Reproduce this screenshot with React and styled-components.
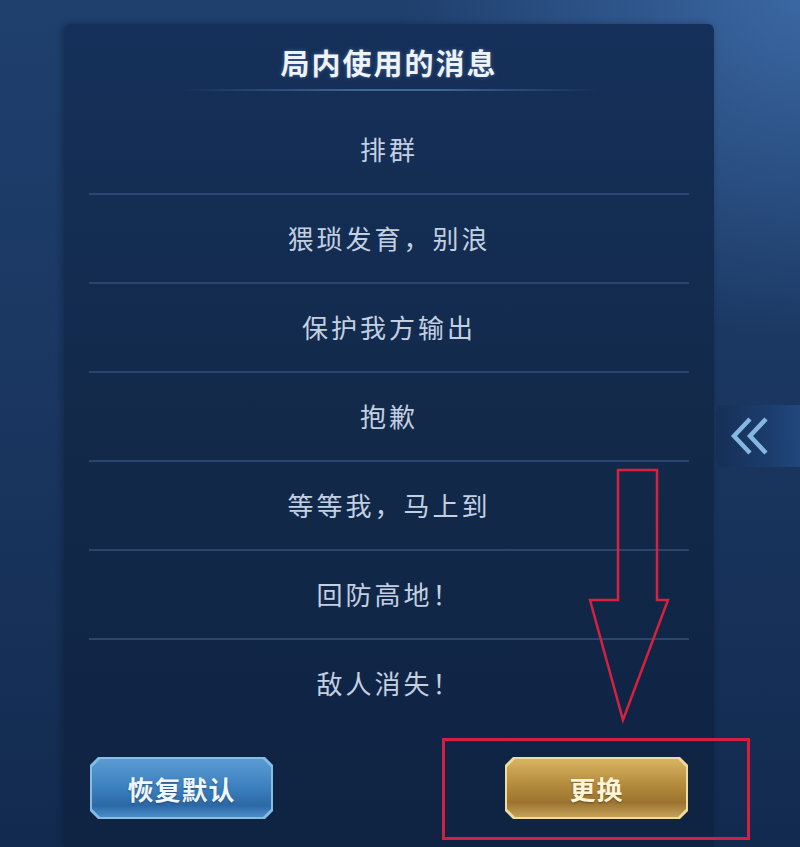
import React from 'react'
import styled, { createGlobalStyle } from 'styled-components'

const GlobalStyle = createGlobalStyle`
  html, body {
    margin: 0;
    padding: 0;
    background: #162f57;
  }
  * {
    box-sizing: border-box;
  }
`;

const messages = [
  '排群',
  '猥琐发育，别浪',
  '保护我方输出',
  '抱歉',
  '等等我，马上到',
  '回防高地！',
  '敌人消失！',
];

function App() {
  return (
    <>
      <GlobalStyle />
      <Page>
        <Panel>
          <TitleBlock>
            <Title>局内使用的消息</Title>
            <Glow />
          </TitleBlock>
          <MessageList>
            {messages.map((m, i) => (
              <Row key={m} last={i === messages.length - 1}>
                {m}
              </Row>
            ))}
          </MessageList>
          <ButtonBar>
            <ButtonFrame tone="blue">
              <ButtonFace tone="blue">恢复默认</ButtonFace>
            </ButtonFrame>
            <ButtonFrame tone="gold">
              <ButtonFace tone="gold">更换</ButtonFace>
            </ButtonFrame>
          </ButtonBar>
        </Panel>
        <Side>
          <Tab>
            <svg width="46" height="44" viewBox="0 0 46 44">
              <polyline points="24,5 8,22 24,39" fill="none" stroke="#86b6e2" strokeWidth="4.5" strokeLinejoin="miter" />
              <polyline points="40,5 24,22 40,39" fill="none" stroke="#86b6e2" strokeWidth="4.5" strokeLinejoin="miter" />
            </svg>
          </Tab>
        </Side>
        <Arrow width="90" height="262" viewBox="0 0 90 262">
          <polygon
            points="33,5 72,5 72,135 83,135 38,255 5,135 33,135"
            fill="none"
            stroke="#d8203f"
            strokeWidth="2.5"
            strokeLinejoin="miter"
          />
        </Arrow>
        <Highlight />
      </Page>
    </>
  );
}

const Page = styled.div`
  position: relative;
  width: 800px;
  height: 847px;
  overflow: hidden;
  display: flex;
  padding: 24px 0 0 64px;
  font-family: "Noto Sans CJK SC", "Noto Sans", sans-serif;
  background:
    radial-gradient(ellipse 420px 360px at 820px -20px, rgba(70, 120, 185, 0.75), rgba(70, 120, 185, 0) 100%),
    linear-gradient(180deg, #1f3f6d 0%, #1a3761 45%, #132a4f 100%);
`;

const Panel = styled.div`
  width: 650px;
  display: flex;
  flex-direction: column;
  padding: 0 25px;
  border-radius: 6px 6px 0 0;
  background: linear-gradient(180deg, #15305a 0%, #122949 50%, #0f2343 100%);
  box-shadow: -2px 0 6px rgba(8, 20, 40, 0.35);
`;

const TitleBlock = styled.div`
  height: 82px;
  display: flex;
  flex-direction: column;
  align-items: center;
  padding-top: 23px;
`;

const Title = styled.h1`
  margin: 0;
  font-size: 29px;
  line-height: 30px;
  font-weight: 700;
  letter-spacing: 2px;
  color: #eef3fa;
  text-shadow: 0 0 4px rgba(150, 190, 240, 0.35);
`;

const Glow = styled.div`
  margin-top: 12px;
  width: 420px;
  height: 2px;
  background: linear-gradient(90deg, rgba(90, 140, 200, 0) 0%, rgba(110, 160, 220, 0.5) 45%, rgba(110, 160, 220, 0.5) 60%, rgba(90, 140, 200, 0) 100%);
`;

const MessageList = styled.div`
  display: flex;
  flex-direction: column;
`;

const Row = styled.div`
  height: ${p => (p.last ? '87px' : '89px')};
  display: flex;
  align-items: center;
  justify-content: center;
  padding-bottom: 2px;
  font-size: 26px;
  letter-spacing: 3px;
  color: #c2d0e2;
  border-bottom: ${p => (p.last ? 'none' : '2px solid #2a4670')};
`;

const ButtonBar = styled.div`
  display: flex;
  justify-content: space-between;
  padding: 30px 1px 0;
`;

const chamfer = `polygon(8px 0, calc(100% - 8px) 0, 100% 8px, 100% calc(100% - 8px), calc(100% - 8px) 100%, 8px 100%, 0 calc(100% - 8px), 0 8px)`;

const ButtonFrame = styled.div`
  width: 183px;
  height: 62px;
  padding: 2px;
  clip-path: ${chamfer};
  background: ${p => (p.tone === 'gold' ? '#efdca0' : '#86bde6')};
`;

const ButtonFace = styled.div`
  width: 100%;
  height: 100%;
  display: flex;
  align-items: center;
  justify-content: center;
  clip-path: ${chamfer};
  font-size: 26px;
  font-weight: 700;
  letter-spacing: 1px;
  color: ${p => (p.tone === 'gold' ? '#fff4d8' : '#eef6ff')};
  text-shadow: 0 1px 2px rgba(0, 0, 0, 0.35);
  background: ${p =>
    p.tone === 'gold'
      ? 'linear-gradient(180deg, #d8b462 0%, #b48a3c 45%, #9c7430 75%, #c4a058 100%)'
      : 'linear-gradient(180deg, #5a9bd2 0%, #3c7fbe 50%, #2c68a6 80%, #4a8dc8 100%)'};
`;

const Side = styled.div`
  flex: 1;
  display: flex;
  align-items: center;
  padding-left: 2px;
`;

const Tab = styled.div`
  width: 84px;
  height: 62px;
  display: flex;
  align-items: center;
  padding-left: 10px;
  border-radius: 8px 0 0 8px;
  background: linear-gradient(90deg, rgba(14, 34, 66, 0.3) 0%, rgba(30, 76, 136, 0.3) 60%, rgba(46, 104, 180, 0.35) 100%);
`;

const Arrow = styled.svg`
  position: absolute;
  left: 585px;
  top: 465px;
`;

const Highlight = styled.div`
  position: absolute;
  left: 442px;
  top: 738px;
  width: 308px;
  height: 102px;
  border: 3px solid #d51f40;
`;

export default App
